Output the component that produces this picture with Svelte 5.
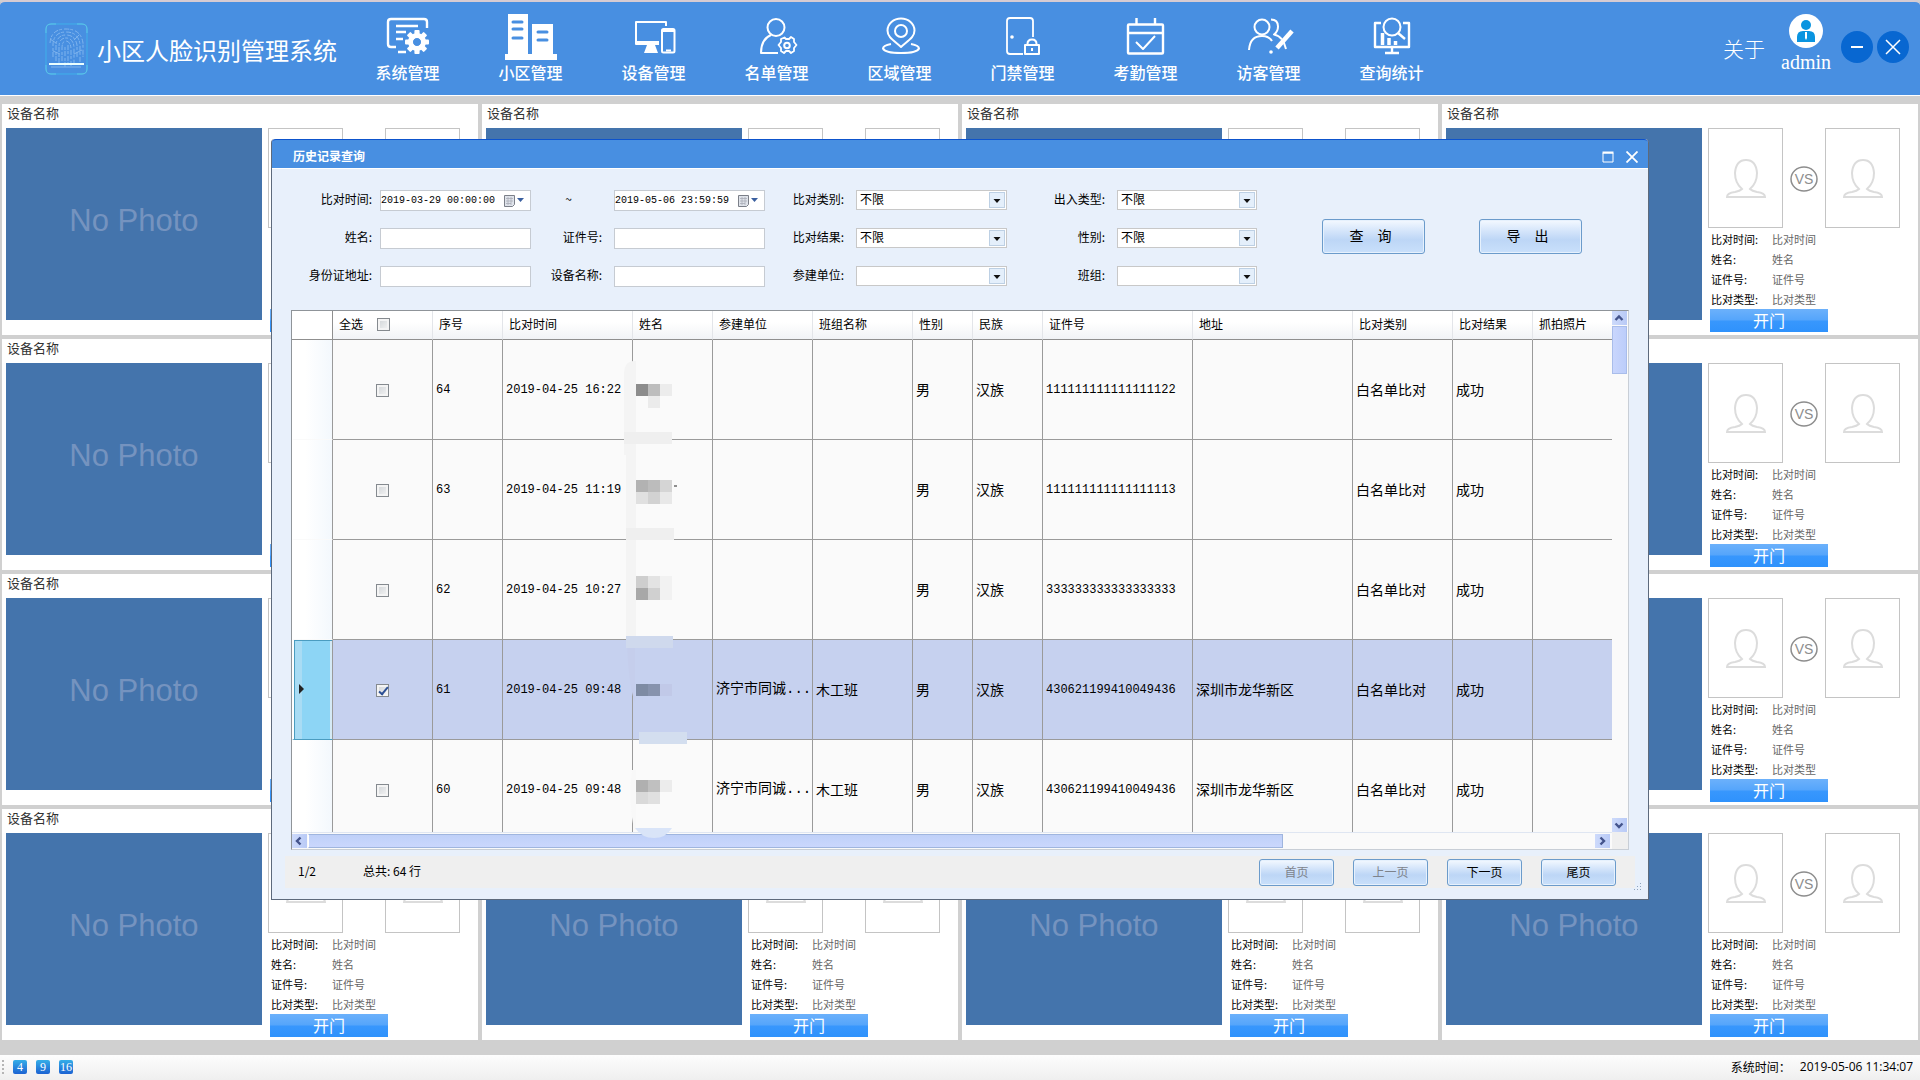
<script>
  const navItems = [
    { id: 'system', label: '系统管理' },
    { id: 'community', label: '小区管理' },
    { id: 'device', label: '设备管理' },
    { id: 'list', label: '名单管理' },
    { id: 'area', label: '区域管理' },
    { id: 'access', label: '门禁管理' },
    { id: 'attendance', label: '考勤管理' },
    { id: 'visitor', label: '访客管理' },
    { id: 'stats', label: '查询统计' }
  ];

  const tiles = Array.from({ length: 16 }, (_, i) => i);
  const tileFields = [
    ['比对时间:', '比对时间'],
    ['姓名:', '姓名'],
    ['证件号:', '证件号'],
    ['比对类型:', '比对类型']
  ];

  const columns = [
    { title: '序号', cls: 'c-no' },
    { title: '比对时间', cls: 'c-time' },
    { title: '姓名', cls: 'c-name' },
    { title: '参建单位', cls: 'c-unit' },
    { title: '班组名称', cls: 'c-team' },
    { title: '性别', cls: 'c-sex' },
    { title: '民族', cls: 'c-nation' },
    { title: '证件号', cls: 'c-id' },
    { title: '地址', cls: 'c-addr' },
    { title: '比对类别', cls: 'c-kind' },
    { title: '比对结果', cls: 'c-result' },
    { title: '抓拍照片', cls: 'c-photo' }
  ];

  let rows = $state([
    { no: 64, time: '2019-04-25 16:22', unit: '', team: '', id: '111111111111111122', addr: '', checked: false },
    { no: 63, time: '2019-04-25 11:19', unit: '', team: '', id: '111111111111111113', addr: '', checked: false },
    { no: 62, time: '2019-04-25 10:27', unit: '', team: '', id: '333333333333333333', addr: '', checked: false },
    { no: 61, time: '2019-04-25 09:48', unit: '济宁市同诚...', team: '木工班', id: '430621199410049436', addr: '深圳市龙华新区', checked: true },
    { no: 60, time: '2019-04-25 09:48', unit: '济宁市同诚...', team: '木工班', id: '430621199410049436', addr: '深圳市龙华新区', checked: false }
  ]);
  let selected = $state(61);

  // Mosaic blocks that hide personal names: x, y, colour
  const mosaic = [
    [16, 29, '#8c8c8c'], [28, 29, '#bdbdbd'], [40, 29, '#ececec'], [28, 41, '#ebebeb'],
    [16, 125, '#b2b2b2'], [28, 125, '#bcbcbc'], [40, 125, '#d5d5d5'],
    [16, 137, '#e0e0e0'], [28, 137, '#d2d2d2'], [40, 137, '#e8e8e8'],
    [16, 221, '#cecece'], [28, 221, '#e3e3e3'], [40, 221, '#f2f2f2'],
    [16, 233, '#a8a8a8'], [28, 233, '#d0d0d0'], [40, 233, '#f2f2f2'],
    [16, 329, '#7e8ba3'], [28, 329, '#8793ad'], [40, 329, '#c1c9e8'],
    [16, 425, '#b0b0b0'], [28, 425, '#c0c0c0'], [40, 425, '#ececec'],
    [16, 437, '#d9d9d9'], [28, 437, '#e0e0e0']
  ];

  const teeth = [0, 45, 90, 135, 180, 225, 270, 315];
</script>

{#snippet navIcon(id)}
  <svg class="nav-icon" viewBox="0 0 52 46" fill="none" stroke="#fff" stroke-width="2" stroke-linejoin="round" aria-hidden="true">
    {#if id === 'system'}
      <path d="M45 14V8q0-3-3-3H9Q6 5 6 8v22q0 3 3 3h5M14 12h22M14 18h10M14 25h7M16 38h8" stroke-width="2.4" />
      <g fill="#fff" stroke="none">
        {#each teeth as a (a)}
          <rect x="32.4" y="16" width="5.2" height="8" rx="1" transform="rotate({a} 35 28)" />
        {/each}
      </g>
      <circle cx="35" cy="28" r="6.5" stroke-width="5" />
    {:else if id === 'community'}
      <g fill="#fff" stroke="none">
        <path d="M3 0h20v40H3zM27 10h21v30H27zM0 40h52v6H0z" />
      </g>
      <path d="M8 8h9M8 15h9M8 24h9M33 18h9M33 26h9" stroke="#488fe1" stroke-width="3" stroke-linecap="round" />
    {:else if id === 'device'}
      <path d="M38 12V8H8v22h22" />
      <path d="M8 27h23v4H8zM19 31h8l3 8H16z" fill="#fff" stroke="none" />
      <rect x="34" y="15" width="12.500" height="23.500" rx="1.500" />
      <path d="M34 17h12M38 36.500h5" />
    {:else if id === 'list'}
      <circle cx="25" cy="13.500" r="8.500" />
      <path d="M20 21Q10 25 10 39h17" />
      <circle cx="36" cy="31.500" r="2.800" />
      <path d="M33.500 23.500l1.500 1.500h3l2-2 3 2v3l2.500 3-2.500 3v3l-3 2-2-2h-3l-2 2-3-2v-3l-2.500-3 2.500-3v-3z" stroke-width="1.800" />
    {:else if id === 'area'}
      <path d="M27 33C19 26 13.500 23 13.500 16.500a13.500 12 0 0 1 27 0C40.500 23 35 26 27 33z" />
      <circle cx="27" cy="17" r="6" />
      <path d="M17 30q-8 1.500-8 4.500 2 4.500 18 4.500t18-4.500q0-3-8-4.500" />
    {:else if id === 'access'}
      <path d="M36 23V7q0-3-3-3H13q-3 0-3 3v30q0 3 3 3h13" stroke-width="1.800" />
      <circle cx="15" cy="23" r="1.800" fill="#fff" stroke="none" />
      <rect x="28" y="31" width="14" height="9" />
      <path d="M30.500 31v-1q0-4.500 4.500-4.500t4.500 4.500v1M35 34v3" />
    {:else if id === 'attendance'}
      <rect x="8" y="10.500" width="35" height="29" rx="1" stroke-width="2.400" />
      <path d="M8 19h35M16.500 4v6M35 4v6" stroke-width="2.400" />
      <path d="M16 28l7 7 12-13" />
    {:else if id === 'visitor'}
      <circle cx="19" cy="13" r="7.500" />
      <path d="M6 36Q7 22 19 22q7 0 10 5M28 5.500q7 0 7 7 0 5-4 8 5 1 8 5" />
      <path d="M49 17L34 34" stroke-width="4.500" />
      <path d="M40 26l3 9" stroke-width="2" />
      <circle cx="28" cy="38" r="1.800" fill="#fff" stroke="none" />
    {:else}
      <path d="M15 9H9v24h34V9h-6M26 33v5M19 39h14" stroke-width="2.400" />
      <circle cx="26" cy="13" r="8.500" />
      <path d="M32 19l7 6" stroke-width="2.400" />
      <path d="M16.500 19v12M23 24v7M29.500 27v4" stroke-width="3.500" />
    {/if}
  </svg>
{/snippet}

{#snippet face()}
  <svg class="face" viewBox="0 0 40 40" fill="none" stroke="#dcdcdc" stroke-width="2" aria-hidden="true">
    <path d="M16 31Q9 25 9 15 10 2 20 2t11 13q0 10-7 16 2 2 7 3 8 1 8 5H1q0-4 8-5 5-1 7-3z" />
  </svg>
{/snippet}

{#snippet selectBox(id, value)}
  <span class="select-wrap">
    <select {id}>
      <option>{value}</option>
    </select>
    <svg class="drop" viewBox="0 0 16 16" aria-hidden="true">
      <rect x="0.500" y="0.500" width="15" height="15" fill="#e4effb" stroke="#bdd0e4" />
      <path d="M4.500 7h7L8 11z" fill="#111" />
    </svg>
  </span>
{/snippet}

{#snippet dateBox(id, label, value)}
  <span class="date-box">
    <input {id} type="text" {value} aria-label={label} />
    <button type="button" aria-label="选择日期">
      <svg viewBox="0 0 22 14" aria-hidden="true">
        <path d="M1.500 1.500h10v9l-2 2h-8z" fill="#dfe3ea" stroke="#7b7f88" />
        <path d="M3 4.500h7M3 7h7M3 9.500h5M5 3v8M8 3v8" stroke="#a9adb8" stroke-width="0.800" />
        <path d="M14 4h7l-3.500 4z" fill="#3a5f9f" />
      </svg>
    </button>
  </span>
{/snippet}

<div class="page">
  <header class="top">
    <svg class="logo" viewBox="0 0 43 52" fill="none" aria-hidden="true">
      <rect x="1" y="1" width="41" height="50" rx="5" stroke="#3fb0ea" />
      <path d="M1 10V6q0-5 5-5h5M32 1h5q5 0 5 5v4M42 42v4q0 5-5 5h-5M11 51H6q-5 0-5-5v-4" stroke="#5fc6e8" />
      <g stroke="#7fb4ee" stroke-width="1">
        <path d="M5 20Q6 6 21 6t17 14v14M8 34V21Q9 9 21 9t14 12v18M11 38V22q1-10 10-10t11 10v12M14 40V24q0-9 7-9t8 9v18M17 38V25q0-7 4-7t5 7v18M20 44V22M23 22v18" stroke-dasharray="5 1 3 2" />
        <path d="M5 16l6 4M34 12l-5 5M8 28l7 3M37 27l-8 4M6 44h30" />
      </g>
      <path d="M4 41h35" stroke="#eaffff" stroke-width="2" />
    </svg>
    <h1>小区人脸识别管理系统</h1>
    <nav aria-label="主菜单">
      {#each navItems as item (item.id)}
        <button type="button" class="nav-item">
          {@render navIcon(item.id)}
          <span>{item.label}</span>
        </button>
      {/each}
    </nav>
    <div class="user-area">
      <button type="button" class="about">关于</button>
      <button type="button" class="user">
        <svg viewBox="0 0 34 34" aria-hidden="true">
          <circle cx="17" cy="17" r="17" fill="#fff" />
          <circle cx="17" cy="11" r="5" fill="#0a94e0" />
          <path d="M8 28v-5q0-6 6-6h6q6 0 6 6v5z" fill="#0a94e0" />
          <path d="M16 18h2v6l-1 2-1-2z" fill="#fff" />
        </svg>
        <span>admin</span>
      </button>
      <button type="button" class="round" aria-label="最小化">
        <svg viewBox="0 0 32 32" stroke="#fff" aria-hidden="true"><path d="M10 16h12" stroke-width="2" /></svg>
      </button>
      <button type="button" class="round" aria-label="关闭">
        <svg viewBox="0 0 32 32" stroke="#fff" aria-hidden="true"><path d="M9 9l14 14M23 9L9 23" stroke-width="1.500" /></svg>
      </button>
    </div>
  </header>

  <main class="tiles">
    {#each tiles as tile (tile)}
      <section class="tile">
        <h2>设备名称</h2>
        <div class="tile-body">
          <div class="photo">No Photo</div>
          <div class="compare">
            <div class="faces">
              <div class="face-box">{@render face()}</div>
              <svg class="vs" viewBox="0 0 28 28" aria-hidden="true">
                <ellipse cx="14" cy="15" rx="13" ry="12" fill="none" stroke="#8d8d8d" stroke-width="1.500" />
                <text x="14" y="20" text-anchor="middle">VS</text>
              </svg>
              <div class="face-box">{@render face()}</div>
            </div>
            <dl>
              {#each tileFields as [name, value] (name)}
                <div><dt>{name}</dt><dd>{value}</dd></div>
              {/each}
            </dl>
            <button type="button" class="open">开门</button>
          </div>
        </div>
      </section>
    {/each}
  </main>

  <footer class="status">
    <span class="grip"></span>
    <button type="button">4</button>
    <button type="button">9</button>
    <button type="button">16</button>
    <span class="clock"><span>系统时间：</span><time datetime="2019-05-06T11:34:07">2019-05-06 11:34:07</time></span>
  </footer>

  <div class="dialog" role="dialog" aria-labelledby="dialog-title">
    <div class="dialog-bar">
      <h2 id="dialog-title">历史记录查询</h2>
      <button type="button" aria-label="最大化">
        <svg viewBox="0 0 12 12" aria-hidden="true"><path d="M1 2h10v9H1z" fill="none" stroke="#fff" /><path d="M0.500 0.500h11v2h-11z" fill="#fff" /></svg>
      </button>
      <button type="button" aria-label="关闭窗口">
        <svg viewBox="0 0 12 12" aria-hidden="true"><path d="M0.500 0.500l11 11M11.500 0.500l-11 11" stroke="#fff" stroke-width="1.800" /></svg>
      </button>
    </div>

    <form class="filters" onsubmit={(e) => e.preventDefault()}>
      <div class="fields">
        <label for="from">比对时间:</label>
        {@render dateBox('from', '开始时间', '2019-03-29 00:00:00')}
        <label for="to" class="tilde">~</label>
        {@render dateBox('to', '结束时间', '2019-05-06 23:59:59')}
        <label for="kind" class="wide">比对类别:</label>
        {@render selectBox('kind', '不限')}
        <label for="inout" class="wide">出入类型:</label>
        {@render selectBox('inout', '不限')}

        <label for="name">姓名:</label>
        <input id="name" type="text" />
        <label for="idno" class="wide">证件号:</label>
        <input id="idno" type="text" />
        <label for="result" class="wide">比对结果:</label>
        {@render selectBox('result', '不限')}
        <label for="sex" class="wide">性别:</label>
        {@render selectBox('sex', '不限')}

        <label for="addr">身份证地址:</label>
        <input id="addr" type="text" />
        <label for="dev" class="wide">设备名称:</label>
        <input id="dev" type="text" />
        <label for="unit" class="wide">参建单位:</label>
        {@render selectBox('unit', '')}
        <label for="team" class="wide">班组:</label>
        {@render selectBox('team', '')}
      </div>
      <div class="actions">
        <button type="submit" class="glass">查　询</button>
        <button type="button" class="glass">导　出</button>
      </div>
    </form>

    <div class="panel">
      <div class="viewport">
        <table>
          <thead>
            <tr>
              <th class="c-head" aria-label="当前行"></th>
              <th class="c-check">
                <label class="all">全选<input type="checkbox" /></label>
              </th>
              {#each columns as col (col.title)}
                <th class={col.cls}>{col.title}</th>
              {/each}
            </tr>
          </thead>
          <tbody>
            {#each rows as row (row.no)}
              <tr class:selected={row.no === selected} onclick={() => (selected = row.no)}>
                <td class="marker">
                  {#if row.no === selected}
                    <svg viewBox="0 0 6 10" aria-hidden="true"><path d="M0 0l5 5-5 5z" fill="#222" /></svg>
                  {/if}
                </td>
                <td class="center"><input type="checkbox" bind:checked={row.checked} aria-label="选择 {row.no}" /></td>
                <td class="num">{row.no}</td>
                <td class="num time">{row.time}</td>
                <td></td>
                <td class="clipped">{row.unit}</td>
                <td>{row.team}</td>
                <td>男</td>
                <td>汉族</td>
                <td class="num">{row.id}</td>
                <td>{row.addr}</td>
                <td>白名单比对</td>
                <td>成功</td>
                <td></td>
              </tr>
            {/each}
          </tbody>
        </table>
      </div>
      <div class="vbar">
        <button type="button" aria-label="向上滚动"><svg viewBox="0 0 14 14" aria-hidden="true"><path d="M3.500 9L7 5.500 10.500 9" /></svg></button>
        <span class="vthumb"></span>
        <button type="button" class="down" aria-label="向下滚动"><svg viewBox="0 0 14 14" aria-hidden="true"><path d="M3.500 5.500L7 9l3.500-3.500" /></svg></button>
      </div>
      <div class="hbar">
        <button type="button" aria-label="向左滚动"><svg viewBox="0 0 14 14" aria-hidden="true"><path d="M8.500 3.500L5 7l3.500 3.500" /></svg></button>
        <span class="hthumb"></span>
        <button type="button" class="right" aria-label="向右滚动"><svg viewBox="0 0 14 14" aria-hidden="true"><path d="M5.500 3.500L9 7l-3.500 3.500" /></svg></button>
      </div>
      <div class="corner"></div>

      <svg class="mosaic" viewBox="0 0 70 490" aria-hidden="true">
        <path d="M4 20Q4 6 14 6h2v278H6V100H4z" fill="#f4f4f4" />
        <path d="M7 284h8v64q-7-20-8-64z" fill="#c5ceec" />
        <path d="M12 415h4v60h-2q-6-30-2-60z" fill="#f8f8f8" />
        <path d="M4 77h48v12H4zM6 173h48v12H6z" fill="#efefef" />
        <path d="M6 281h47v12H6z" fill="#cfd9ed" />
        <path d="M19 377h48v12H19z" fill="#d3deef" />
        <path d="M15 473h37q-6 10-18 10t-19-10z" fill="#d9e4f8" />
        {#each mosaic as [x, y, color] (`${x}-${y}`)}
          <rect {x} {y} width="12" height="12" fill={color} />
        {/each}
        <path d="M54 131h3" stroke="#222" />
      </svg>
    </div>

    <div class="pager">
      <span>1/2</span>
      <span class="total">总共: 64 行</span>
      <button type="button" class="glass" disabled>首页</button>
      <button type="button" class="glass" disabled>上一页</button>
      <button type="button" class="glass">下一页</button>
      <button type="button" class="glass">尾页</button>
      <svg class="resize" viewBox="0 0 9 9" aria-hidden="true">
        <path d="M7 0h1v1H7zM7 3h1v1H7zM7 6h1v1H7zM4 3h1v1H4zM4 6h1v1H4zM1 6h1v1H1z" fill="#8fa3bd" />
      </svg>
    </div>
  </div>
</div>

<style>
  :global(body) {
    margin: 0;
  }

  .page {
    position: relative;
    display: flex;
    flex-direction: column;
    min-height: 100vh;
    background: #d0d0d0;
    color: #000;
    font-family: 'Noto Sans CJK SC', sans-serif;
    font-size: 12px;
  }

  .page,
  .page :global(*) {
    box-sizing: border-box;
  }

  button,
  input,
  select {
    margin: 0;
    padding: 0;
    border: 0;
    font: inherit;
    color: inherit;
  }

  button {
    background: none;
  }

  svg {
    display: block;
    flex: none;
  }

  h1,
  h2,
  dl,
  dd {
    margin: 0;
    font-weight: 400;
  }

  /* Top bar */
  .top {
    display: flex;
    align-items: flex-start;
    height: 96px;
    padding: 0 11px 0 45px;
    border-top: 2px solid #d6cbd2;
    border-bottom: 1px solid #fff;
    border-radius: 5px 5px 0 0;
    background: #488fe1;
    color: #fff;
  }

  .logo {
    width: 43px;
    height: 52px;
    margin-top: 21px;
  }

  h1 {
    width: 258px;
    padding-left: 9px;
    font-size: 24px;
    line-height: 36px;
    margin-top: 30px;
    white-space: nowrap;
  }

  nav {
    display: flex;
  }

  .nav-item {
    display: flex;
    flex-direction: column;
    align-items: center;
    width: 123px;
    padding-top: 12px;
    font-size: 16px;
    line-height: 24px;
    font-weight: 500;
  }

  .nav-icon {
    width: 52px;
    height: 46px;
  }

  .user-area {
    display: flex;
    align-items: flex-start;
    margin: 12px 0 0 auto;
    white-space: nowrap;
  }

  .about {
    margin-top: 20px;
    font-size: 21px;
    line-height: 28px;
    font-weight: 300;
  }

  .user {
    display: flex;
    flex-direction: column;
    align-items: center;
    gap: 2px;
    margin: 0 6px 0 16px;
    font-family: 'Liberation Serif', serif;
    font-size: 20px;
    line-height: 24px;
  }

  .user svg {
    width: 34px;
    height: 34px;
  }

  .round {
    width: 32px;
    height: 32px;
    margin: 17px 0 0 4px;
    border-radius: 50%;
    background: #0867d1;
  }

  .round svg {
    width: 32px;
    height: 32px;
    fill: none;
  }

  /* Camera tiles */
  .tiles {
    flex: 1;
    display: grid;
    grid-template-columns: repeat(4, 1fr);
    align-content: start;
    gap: 4px;
    padding: 8px 2px 15px;
  }

  .tile {
    min-width: 0;
    padding: 0 18px 3px 4px;
    background: #fff;
  }

  .tile h2 {
    padding-left: 1px;
    font-size: 13px;
    line-height: 18px;
    padding-bottom: 6px;
    color: #333;
  }

  .tile-body {
    display: flex;
    align-items: flex-start;
    gap: 6px;
  }

  .photo {
    flex: 1;
    display: flex;
    align-items: center;
    justify-content: center;
    height: 192px;
    padding-bottom: 6px;
    overflow: hidden;
    background: #4474ac;
    color: #7593bf;
    font-family: 'Liberation Sans', sans-serif;
    font-size: 31px;
    white-space: nowrap;
  }

  .compare {
    width: 192px;
  }

  .faces {
    display: flex;
    align-items: center;
    justify-content: space-between;
    margin-bottom: 1px;
  }

  .face-box {
    display: flex;
    align-items: center;
    justify-content: center;
    width: 75px;
    height: 100px;
    border: 1px solid #c4c4c4;
  }

  .face {
    width: 40px;
    height: 40px;
  }

  .vs {
    width: 28px;
    height: 28px;
  }

  .vs text {
    fill: #8d8d8d;
    font-family: 'Liberation Sans', sans-serif;
    font-size: 14px;
  }

  dl div {
    display: flex;
    padding-left: 3px;
    font-size: 11px;
    line-height: 20px;
  }

  dt {
    width: 61px;
  }

  dd {
    color: #666;
  }

  .open {
    display: block;
    width: 118px;
    height: 23px;
    margin-left: 2px;
    padding-bottom: 2px;
    background: linear-gradient(#6cb1fb, #55a5fb 48%, #3897fd 52%, #2f92fc);
    color: #fff;
    font-size: 16px;
    line-height: 20px;
  }

  /* Status bar */
  .status {
    display: flex;
    align-items: center;
    gap: 9px;
    height: 25px;
    padding: 0 7px 2px 2px;
    background: linear-gradient(#fdfdfd, #efefef);
  }

  .grip {
    width: 1px;
    height: 14px;
    border-left: 2px dotted #b5b5b5;
  }

  .status button {
    width: 14px;
    height: 14px;
    border-radius: 2px;
    background: linear-gradient(#35aee8, #1c62d2);
    color: #fff;
    font-family: 'Liberation Serif', serif;
    font-size: 12px;
    line-height: 14px;
    text-align: center;
  }

  .clock {
    display: flex;
    gap: 9px;
    margin-left: auto;
  }

  .clock time {
    font-family: 'Open Sans', sans-serif;
  }

  /* Query window */
  .dialog {
    position: absolute;
    top: 139px;
    left: 271px;
    right: 271px;
    border: 1px solid #5d6a7c;
    border-top: 0;
    border-radius: 4px 4px 0 0;
    background: #e8f0fb;
  }

  .dialog-bar {
    display: flex;
    align-items: center;
    gap: 12px;
    height: 30px;
    padding: 5px 10px 0 21px;
    border-top: 1px solid #0d53cc;
    border-bottom: 1px solid #fff;
    border-radius: 4px 4px 0 0;
    background: #488fe1;
    color: #fff;
  }

  .dialog-bar h2 {
    margin-right: auto;
    padding-bottom: 2px;
    font-size: 12px;
    font-weight: 700;
  }

  .dialog-bar button,
  .dialog-bar svg {
    width: 12px;
    height: 12px;
  }

  .filters {
    display: flex;
    gap: 65px;
    padding: 21px 0 23px;
  }

  .fields {
    display: grid;
    grid-template-columns: 108px 151px 83px 151px 91px 151px 110px 140px;
    grid-auto-rows: 21px;
    row-gap: 17px;
  }

  .fields label {
    padding-right: 8px;
    line-height: 18px;
    text-align: right;
    white-space: nowrap;
  }

  .fields .wide {
    padding-right: 12px;
  }

  .fields .tilde {
    padding-right: 8px;
    text-align: center;
  }

  .fields > input,
  .date-box {
    border: 1px solid #c6cbd2;
    background: #fff;
    min-width: 0;
  }

  .date-box {
    display: flex;
    align-items: center;
  }

  .date-box input {
    flex: 1;
    min-width: 0;
    background: none;
    font-family: 'Liberation Mono', monospace;
    font-size: 10px;
  }

  .date-box button,
  .date-box svg {
    width: 22px;
    height: 14px;
  }

  .date-box button {
    margin-right: 5px;
  }

  .select-wrap {
    position: relative;
    display: block;
  }

  select {
    appearance: none;
    display: block;
    width: 100%;
    height: 20px;
    padding: 0 0 2px 3px;
    border: 1px solid #c8c8c8;
    border-radius: 0;
    background: #fff;
    line-height: 16px;
  }

  .drop {
    position: absolute;
    top: 2px;
    right: 2px;
    width: 16px;
    height: 16px;
    pointer-events: none;
  }

  .actions {
    display: flex;
    align-items: center;
    gap: 54px;
    padding-bottom: 4px;
  }

  .glass {
    border: 1px solid #6b9bcb;
    border-radius: 3px;
    background: linear-gradient(#f4f9ff, #d3e4fa 35%, #bdd6f6 60%, #c9e0fb);
    box-shadow: inset 0 0 0 1px #e6f1fd;
  }

  .actions .glass {
    width: 103px;
    height: 35px;
    font-size: 14px;
    line-height: 20px;
    padding: 0 6px 4px 0;
  }

  /* Record table */
  .panel {
    position: relative;
    display: grid;
    grid-template-columns: 1fr 16px;
    grid-template-rows: 521px 17px;
    margin: 0 19px;
    border: 1px solid #8f9499;
    border-right-color: #c8ced6;
    border-bottom-color: #c8ced6;
    background: #fafafa;
  }

  .viewport {
    overflow: hidden;
  }

  table {
    width: 100%;
    table-layout: fixed;
    border-collapse: separate;
    border-spacing: 0;
  }

  th {
    height: 29px;
    padding: 0 0 2px 6px;
    border-right: 1px solid #e3e5e9;
    border-bottom: 1px solid #8f8f8f;
    background: linear-gradient(#fff 40%, #f1f3f6);
    font-weight: 400;
    line-height: 18px;
    text-align: left;
    white-space: nowrap;
  }

  .c-head {
    width: 41px;
    border-right-color: #8f8f8f;
    background: #fff;
  }

  .c-check,
  .c-unit,
  .c-team,
  .c-kind {
    width: 100px;
  }

  .c-no,
  .c-nation {
    width: 70px;
  }

  .c-time {
    width: 130px;
  }

  .c-name,
  .c-result {
    width: 80px;
  }

  .c-sex {
    width: 60px;
  }

  .c-id {
    width: 150px;
  }

  .c-addr {
    width: 160px;
  }

  .all {
    display: flex;
    align-items: center;
    gap: 14px;
  }

  td {
    height: 100px;
    padding: 0 0 2px 3px;
    border-right: 1px solid #9a9a9a;
    border-bottom: 1px solid #9a9a9a;
    font-size: 14px;
    line-height: 20px;
    white-space: nowrap;
  }

  th:last-child,
  td:last-child {
    border-right: 0;
  }

  .num {
    padding-bottom: 0;
    font-family: 'Liberation Mono', monospace;
    font-size: 12px;
    line-height: 18px;
  }

  td.clipped {
    font-family: 'Liberation Mono', 'Noto Sans CJK SC', monospace;
  }

  td.center {
    padding: 0 0 2px;
    text-align: center;
  }

  .marker {
    padding-left: 5px;
    border-left: 2px solid #fff;
    border-bottom-color: transparent;
    background: linear-gradient(90deg, #fff 30%, #f3f8fd) padding-box;
  }

  .marker svg {
    width: 6px;
    height: 10px;
  }

  .selected {
    background: #c6d1ef;
  }

  .selected .marker {
    border-bottom-color: #4a9cc0;
    background: linear-gradient(90deg, #a9dcf4 8px, #8dd5f5 8px) padding-box;
    box-shadow: inset 1px 1px 0 #4a9cc0, inset -2px 0 0 #d5eaf5;
  }

  input[type='checkbox'] {
    appearance: none;
    position: relative;
    width: 13px;
    height: 13px;
    border: 1px solid #858a8f;
    background: linear-gradient(135deg, #cfd3d6, #f6f6f6);
    box-shadow: inset 0 0 0 2px #f4f4f4;
    vertical-align: middle;
  }

  input[type='checkbox']:checked::after {
    content: '';
    position: absolute;
    top: 0;
    left: 4px;
    width: 3px;
    height: 8px;
    border: solid #2c4f94;
    border-width: 0 2px 2px 0;
    transform: rotate(40deg);
  }

  .vbar {
    display: flex;
    flex-direction: column;
    padding-right: 1px;
  }

  .hbar {
    display: flex;
    padding: 1px 2px 1px 0;
    border-top: 1px solid #dfe6f2;
  }

  .vbar button,
  .hbar button {
    width: 15px;
    height: 14px;
    background: linear-gradient(90deg, #cddafb, #b9caf6);
  }

  .vbar svg,
  .hbar svg {
    width: 14px;
    height: 14px;
    fill: none;
    stroke: #44548c;
    stroke-width: 2.4;
  }

  .vthumb {
    height: 48px;
    margin-top: 1px;
    border: 1px solid #a9bdea;
    background: linear-gradient(90deg, #c9d6fd, #bccdfa);
  }

  .down {
    margin-top: auto;
  }

  .hthumb {
    width: 74%;
    margin-left: 1px;
    border: 1px solid #9fb5de;
    border-left-color: #fff;
    background: linear-gradient(#bfd0f8, #cad7fd);
  }

  .right {
    margin-left: auto;
  }

  .corner {
    background: #efefef;
  }

  .mosaic {
    position: absolute;
    top: 44px;
    left: 328px;
    width: 70px;
    height: 490px;
    pointer-events: none;
  }

  /* Pager */
  .pager {
    position: relative;
    display: flex;
    align-items: center;
    gap: 19px;
    height: 32px;
    margin: 6px 13px 11px;
    padding: 1px 19px 0 13px;
    background: #efefef;
  }

  .pager span {
    padding-bottom: 5px;
  }

  .total {
    margin: 0 auto 0 28px;
  }

  .pager .glass {
    width: 75px;
    height: 27px;
    padding-bottom: 2px;
    line-height: 20px;
  }

  .pager .glass:disabled {
    color: #7d838c;
  }

  .resize {
    position: absolute;
    right: -7px;
    bottom: -4px;
    width: 9px;
    height: 9px;
  }
</style>
